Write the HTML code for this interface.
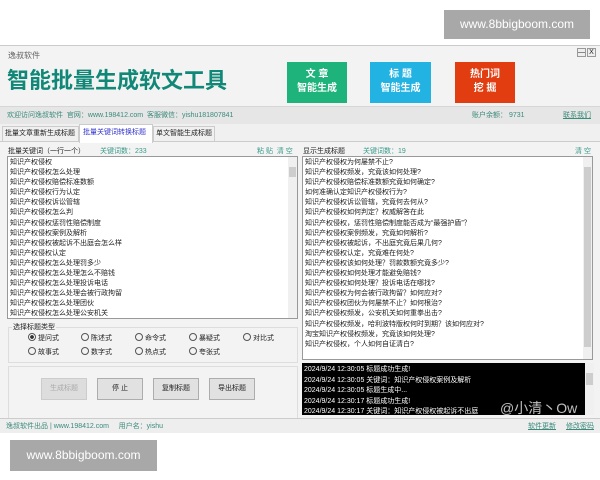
<!DOCTYPE html><html><head><meta charset="utf-8"><style>
*{margin:0;padding:0;box-sizing:border-box}
body{width:600px;height:480px;background:#fff;position:relative;overflow:hidden;font-family:"Liberation Sans","Noto Sans CJK SC",sans-serif;font-size:7px;color:#222}
.a{position:absolute}
.btn{position:absolute;color:#fff;font-weight:bold;font-size:10px;text-align:center;line-height:14px;padding-top:6px}
.ta{position:absolute;background:#fff;border:1px solid #999;overflow:hidden;line-height:10.1px;padding:1px 2px}
.sb{position:absolute;right:0;top:0;bottom:0;width:9px;background:#f0f0f0}
.sb i{position:absolute;left:1px;right:1px;background:#cdcdcd}
.r{position:absolute;font-size:7px}
.r:before{content:"";display:inline-block;width:6px;height:6px;border:1px solid #555;border-radius:50%;margin-right:2px;vertical-align:-1px}
.r.on:before{background:radial-gradient(#333 40%,#fff 50%)}
.gb{position:absolute;background:#e1e1e1;border:1px solid #adadad;font-size:7px;text-align:center;line-height:20px;height:22px;width:46px}
</style></head><body>
<div class="a" style="left:444px;top:10px;width:146px;height:29px;background:#a8a8a8;color:#fff;font-size:12px;line-height:29px;text-align:center">www.8bbigboom.com</div>
<div class="a" style="left:0;top:45px;width:600px;height:388px;background:#f3f3f3;border-top:1px solid #ccc;border-bottom:1px solid #ccc"></div>
<div class="a" style="left:8px;top:50px;font-size:8px;color:#666">逸叔软件</div>
<div class="a" style="left:7px;top:63px;font-size:22px;font-weight:bold;color:#118877">智能批量生成软文工具</div>
<div class="btn" style="left:287px;top:62px;width:60px;height:41px;background:#1eb37a">文 章<br>智能生成</div>
<div class="btn" style="left:370px;top:62px;width:61px;height:41px;background:#22b3e3">标 题<br>智能生成</div>
<div class="btn" style="left:455px;top:62px;width:60px;height:41px;background:#e23d10">热门词<br>挖 掘</div>
<div class="a" style="left:577px;top:48px;width:9px;height:9px;border:1px solid #999;background:#eee;font-size:7px;text-align:center;line-height:7px">—</div>
<div class="a" style="left:587px;top:48px;width:9px;height:9px;border:1px solid #999;background:#eee;font-size:7px;text-align:center;line-height:7px">X</div>
<div class="a" style="left:0;top:106px;width:600px;height:18px;background:#e6e6e6;border-top:1px solid #d6d6d6"></div>
<div class="a" style="left:7px;top:110px;color:#3a8a7a">欢迎访问逸叔软件 &nbsp;官网：www.198412.com &nbsp;客服微信：yishu181807841</div>
<div class="a" style="left:472px;top:110px;color:#3a8a7a">账户余额： 9731</div>
<div class="a" style="left:563px;top:110px;color:#3a8a7a;text-decoration:underline">联系我们</div>
<div class="a" style="left:0;top:124px;width:600px;height:18px;background:#f0f0f0;border-bottom:1px solid #ccc"></div>
<div class="a" style="left:2px;top:126px;height:16px;width:77px;border:1px solid #ccc;line-height:14px;padding-left:2px">批量文章重新生成标题</div>
<div class="a" style="left:79px;top:124px;height:19px;width:74px;border:1px solid #ccc;border-bottom:none;background:#fff;line-height:16px;padding-left:3px;color:#33c">批量关键词转换标题</div>
<div class="a" style="left:153px;top:126px;height:16px;width:62px;border:1px solid #ccc;line-height:14px;padding-left:2px">单文智能生成标题</div>
<div class="a" style="left:8px;top:146px">批量关键词（一行一个）</div>
<div class="a" style="left:100px;top:146px;color:#3a9a8a">关键词数：233</div>
<div class="a" style="left:257px;top:146px;color:#3a9a8a">粘 贴 &nbsp;清 空</div>
<div class="ta" style="left:7px;top:156px;width:291px;height:163px">知识产权侵权<br>知识产权侵权怎么处理<br>知识产权侵权赔偿标准数额<br>知识产权侵权行为认定<br>知识产权侵权诉讼管辖<br>知识产权侵权怎么判<br>知识产权侵权惩罚性赔偿制度<br>知识产权侵权案例及解析<br>知识产权侵权被起诉不出庭会怎么样<br>知识产权侵权认定<br>知识产权侵权怎么处理罚多少<br>知识产权侵权怎么处理怎么不赔钱<br>知识产权侵权怎么处理投诉电话<br>知识产权侵权怎么处理会被行政拘留<br>知识产权侵权怎么处理团伙<br>知识产权侵权怎么处理公安机关<div class="sb"><i style="top:10px;height:10px"></i></div></div>
<div class="a" style="left:303px;top:146px">显示生成标题</div>
<div class="a" style="left:363px;top:146px;color:#3a9a8a">关键词数：19</div>
<div class="a" style="left:575px;top:146px;color:#3a9a8a">清 空</div>
<div class="ta" style="left:302px;top:156px;width:291px;height:204px">知识产权侵权为何屡禁不止?<br>知识产权侵权频发，究竟该如何处理?<br>知识产权侵权赔偿标准数额究竟如何确定?<br>如何准确认定知识产权侵权行为?<br>知识产权侵权诉讼管辖，究竟何去何从?<br>知识产权侵权如何判定？权威解答在此<br>知识产权侵权，惩罚性赔偿制度能否成为“最强护盾”？<br>知识产权侵权案例频发，究竟如何解析?<br>知识产权侵权被起诉，不出庭究竟后果几何?<br>知识产权侵权认定，究竟难在何处?<br>知识产权侵权该如何处理？罚款数额究竟多少?<br>知识产权侵权如何处理才能避免赔钱?<br>知识产权侵权如何处理？投诉电话在哪找?<br>知识产权侵权为何会被行政拘留？如何应对?<br>知识产权侵权团伙为何屡禁不止？如何根治?<br>知识产权侵权频发，公安机关如何重拳出击?<br>知识产权侵权频发，哈利波特版权何时到期？该如何应对?<br>淘宝知识产权侵权频发，究竟该如何处理?<br>知识产权侵权，个人如何自证清白?<div class="sb"><i style="top:10px;height:180px"></i></div></div>
<div class="a" style="left:8px;top:327px;width:290px;height:36px;border:1px solid #ddd"></div>
<div class="a" style="left:12px;top:322px;background:#f3f3f3;padding:0 1px">选择标题类型</div>
<div class="r on" style="left:28px;top:333px">提问式</div><div class="r" style="left:81px;top:333px">陈述式</div><div class="r" style="left:135px;top:333px">命令式</div><div class="r" style="left:189px;top:333px">暴疑式</div><div class="r" style="left:243px;top:333px">对比式</div>
<div class="r" style="left:28px;top:347px">故事式</div><div class="r" style="left:81px;top:347px">数字式</div><div class="r" style="left:135px;top:347px">热点式</div><div class="r" style="left:189px;top:347px">夸张式</div>
<div class="a" style="left:8px;top:366px;width:290px;height:54px;border:1px solid #ddd"></div>
<div class="gb" style="left:41px;top:378px;color:#aaa;background:#ddd;border-color:#ccc">生成标题</div>
<div class="gb" style="left:97px;top:378px">停 止</div>
<div class="gb" style="left:153px;top:378px">复制标题</div>
<div class="gb" style="left:209px;top:378px">导出标题</div>
<div class="a" style="left:302px;top:363px;width:283px;height:52px;background:#000;color:#fff;line-height:10.5px;padding:2px;overflow:hidden">2024/9/24 12:30:05 标题成功生成!<br>2024/9/24 12:30:05 关键词：知识产权侵权案例及解析<br>2024/9/24 12:30:05 标题生成中...<br>2024/9/24 12:30:17 标题成功生成!<br>2024/9/24 12:30:17 关键词：知识产权侵权被起诉不出庭</div>
<div class="a" style="left:585px;top:363px;width:9px;height:52px;background:#f0f0f0"><div class="a" style="left:1px;top:10px;width:7px;height:12px;background:#cdcdcd"></div></div>
<div class="a" style="left:500px;top:398px;color:#fff;font-size:14px;opacity:.75">@小清丶Ow</div>
<div class="a" style="left:0;top:418px;width:600px;height:15px;background:#eee;border-top:1px solid #ccc"></div>
<div class="a" style="left:6px;top:421px;color:#3a8a7a">逸叔软件出品 | www.198412.com &nbsp; &nbsp; 用户名：yishu</div>
<div class="a" style="left:528px;top:421px;color:#3a8a7a;text-decoration:underline">软件更新</div>
<div class="a" style="left:566px;top:421px;color:#3a8a7a;text-decoration:underline">修改密码</div>
<div class="a" style="left:10px;top:440px;width:147px;height:31px;background:#a8a8a8;color:#fff;font-size:12px;line-height:31px;text-align:center">www.8bbigboom.com</div>
</body></html>
